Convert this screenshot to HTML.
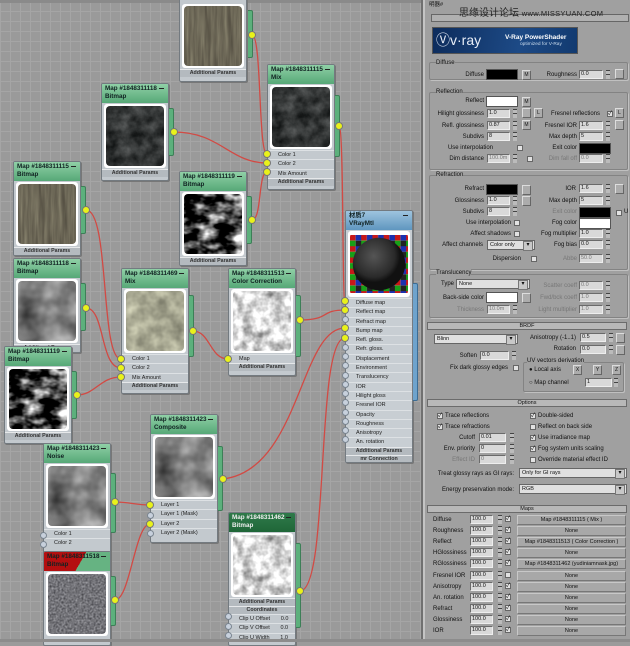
<!DOCTYPE html>
<html><head><meta charset="utf-8">
<style>
*{margin:0;padding:0;box-sizing:border-box}
body{width:630px;height:642px;overflow:hidden;position:relative;font-family:"Liberation Sans","Noto Sans CJK SC",sans-serif;font-size:6px;color:#111;background:#9b9b9b}
#grid{position:absolute;left:0;top:0;width:421px;height:642px;background-color:#9a9a9a;background-image:repeating-linear-gradient(0deg,#a5a5a5 0 1px,transparent 1px 10px),repeating-linear-gradient(90deg,#a5a5a5 0 1px,transparent 1px 10px);border-top:3px solid #8a8a8a}
.node{position:absolute;width:68px;background:#c3c9ce;border:1px solid #737a80;border-radius:2px;box-shadow:1px 1px 0 #777;overflow:hidden}
.hd{height:19px;background:linear-gradient(#8fd0a6,#56a877);font-weight:bold;font-size:6.3px;line-height:8px;padding:1px 3px;color:#122;position:relative}
.hd:after{content:"";position:absolute;right:4px;top:4px;width:5px;height:1px;background:#222}
.im{margin:1px 2px;height:64px;background:#fff;border-radius:3px;padding:2px;position:relative}
.im svg{display:block;width:100%;height:100%;border-radius:4px}
.row{height:9.3px;border-top:1px solid #dde1e4;padding-left:10px;font-size:5.5px;line-height:8px;color:#222}
.ap{height:8px;background:#b4babf;border-top:1px solid #e6e8ea;font-size:5.3px;font-weight:bold;text-align:center;line-height:7px;color:#333}
.tab{position:absolute;width:5px;background:#5cb07c;border:1px solid #3d7f57;border-left:none;border-radius:0 2px 2px 0}
.dot{position:absolute;width:8px;height:8px;border-radius:50%;background:#e9f21a;border:1px solid #777;margin:-4px 0 0 -4px;z-index:5}
.od{position:absolute;width:7px;height:7px;border-radius:50%;background:#c7d0dc;border:1px solid #7a8590;margin:-3.5px 0 0 -3.5px;z-index:5}
#wires{position:absolute;left:0;top:0;z-index:4}
#panel{position:absolute;left:421px;top:0;width:209px;height:642px;background:#a0a0a0;border-left:2px solid #707070;box-shadow:inset 2px 0 0 #c4c4c4}
.a{position:absolute;white-space:nowrap;line-height:8px}
.r{position:absolute;white-space:nowrap;line-height:8px;text-align:right}
.g{color:#777}
.f{position:absolute;height:9px;background:#d9d9d9;border:1px solid #6a6a6a;border-right-color:#eee;border-bottom-color:#eee;font-size:5.5px;line-height:7px;padding-left:1px}
.sp{position:absolute;width:4px;height:9px;background:linear-gradient(#444 0 1px,#bbb 1px 4px,#444 4px 5px,#bbb 5px)}
.b{position:absolute;width:9px;height:10px;background:#acacac;border:1px solid #ddd;border-right-color:#666;border-bottom-color:#666;font-size:5px;text-align:center;line-height:8px}
.cb{position:absolute;width:6px;height:6px;background:#e2e2e2;border:1px solid #666;font-size:6px;line-height:4px;text-align:center}
.sw{position:absolute;width:32px;height:11px;border:1px solid #555}
.grp{position:absolute;border:1px solid #838383;box-shadow:1px 1px 0 #c0c0c0;border-radius:2px}
.bar{position:absolute;left:4px;width:200px;height:8px;background:#b8b8b8;border:1px solid #6b6b6b;text-align:center;font-size:5.5px;line-height:6px}
.dd{position:absolute;height:10px;background:#e0e0e0;border:1px solid #666;font-size:5.5px;line-height:8px;padding-left:2px}
.dd:after{content:"▾";position:absolute;right:1px;top:0;width:8px;height:8px;background:#c8c8c8;border:1px solid #777;font-size:6px;text-align:center;line-height:6px}
.mb{position:absolute;left:94px;width:109px;height:10px;background:#a8a8a8;border:1px solid #c8c8c8;border-right-color:#777;border-bottom-color:#777;text-align:center;font-size:5.5px;line-height:8px}
</style></head><body>
<svg width="0" height="0" style="position:absolute">
<defs>
<filter id="tGray" color-interpolation-filters="sRGB"><feTurbulence type="fractalNoise" baseFrequency="0.3 0.02" numOctaves="3" seed="2"/><feColorMatrix values="0 0 0 0.3 0.27  0 0 0 0.3 0.25  0 0 0 0.25 0.21  0 0 0 0 1"/></filter>
<filter id="tDark" color-interpolation-filters="sRGB"><feTurbulence type="fractalNoise" baseFrequency="0.08" numOctaves="4" seed="5"/><feColorMatrix values="0 0 0 0.4 0.0  0 0 0 0.4 0.01  0 0 0 0.4 0.01  0 0 0 0 1"/></filter>
<filter id="tMarble" color-interpolation-filters="sRGB"><feTurbulence type="fractalNoise" baseFrequency="0.06 0.1" numOctaves="3" seed="9"/><feColorMatrix values="0 0 0 2.4 -0.9  0 0 0 2.4 -0.9  0 0 0 2.4 -0.9  0 0 0 0 1"/></filter>
<filter id="tLight" color-interpolation-filters="sRGB"><feTurbulence type="fractalNoise" baseFrequency="0.07" numOctaves="3" seed="3"/><feColorMatrix values="0 0 0 0.5 0.4  0 0 0 0.5 0.4  0 0 0 0.45 0.34  0 0 0 0 1"/></filter>
<filter id="tWhite" color-interpolation-filters="sRGB"><feTurbulence type="fractalNoise" baseFrequency="0.1" numOctaves="3" seed="7"/><feColorMatrix values="0 0 0 1.0 0.35  0 0 0 1.0 0.35  0 0 0 1.0 0.35  0 0 0 0 1"/></filter>
<filter id="tCloud" color-interpolation-filters="sRGB"><feTurbulence type="fractalNoise" baseFrequency="0.04" numOctaves="3" seed="11"/><feColorMatrix values="0 0 0 0.7 0.15  0 0 0 0.7 0.15  0 0 0 0.7 0.15  0 0 0 0 1"/></filter>
<filter id="tFine" color-interpolation-filters="sRGB"><feTurbulence type="fractalNoise" baseFrequency="0.5" numOctaves="2" seed="1"/><feColorMatrix values="0 0 0 0.5 0.2  0 0 0 0.5 0.2  0 0 0 0.5 0.22  0 0 0 0 1"/></filter>
</defs></svg>

<div id="grid"></div>

<div class="node" style="left:179px;top:-2px;height:84px"><div class="im" style="margin-top:5px"><svg><rect width="100%" height="100%" filter="url(#tGray)"/></svg></div><div class="ap">Additional Params</div></div>
<div class="tab" style="left:248px;top:10px;height:48px"></div>

<div class="node" style="left:267px;top:64px;height:126px"><div class="hd">Map #1848311115<br>Mix</div><div class="im"><svg><rect width="100%" height="100%" filter="url(#tDark)"/></svg></div><div class="row">Color 1</div><div class="row">Color 2</div><div class="row">Mix Amount</div><div class="ap">Additional Params</div></div>
<div class="tab" style="left:335px;top:95px;height:62px"></div>

<div class="node" style="left:101px;top:83px;height:98px"><div class="hd">Map #1848311118<br>Bitmap</div><div class="im"><svg><rect width="100%" height="100%" filter="url(#tDark)"/></svg></div><div class="ap">Additional Params</div></div>
<div class="tab" style="left:169px;top:108px;height:48px"></div>

<div class="node" style="left:13px;top:161px;height:95px"><div class="hd">Map #1848311115<br>Bitmap</div><div class="im"><svg><rect width="100%" height="100%" filter="url(#tGray)"/></svg></div><div class="ap">Additional Params</div></div>
<div class="tab" style="left:81px;top:186px;height:48px"></div>

<div class="node" style="left:179px;top:171px;height:95px"><div class="hd">Map #1848311119<br>Bitmap</div><div class="im"><svg><rect width="100%" height="100%" filter="url(#tMarble)"/></svg></div><div class="ap">Additional Params</div></div>
<div class="tab" style="left:247px;top:196px;height:48px"></div>

<div class="node" style="left:13px;top:258px;height:95px"><div class="hd">Map #1848311118<br>Bitmap</div><div class="im"><svg><rect width="100%" height="100%" filter="url(#tCloud)"/></svg></div><div class="ap">Additional Params</div></div>
<div class="tab" style="left:81px;top:283px;height:48px"></div>

<div class="node" style="left:121px;top:268px;height:126px"><div class="hd">Map #1848311469<br>Mix</div><div class="im"><svg><rect width="100%" height="100%" filter="url(#tLight)"/></svg></div><div class="row">Color 1</div><div class="row">Color 2</div><div class="row">Mix Amount</div><div class="ap">Additional Params</div></div>
<div class="tab" style="left:189px;top:295px;height:62px"></div>

<div class="node" style="left:228px;top:268px;height:108px"><div class="hd">Map #1848311513<br>Color Correction</div><div class="im"><svg><rect width="100%" height="100%" filter="url(#tWhite)"/></svg></div><div class="row">Map</div><div class="ap">Additional Params</div></div>
<div class="tab" style="left:296px;top:295px;height:62px"></div>

<div class="node" style="left:4px;top:346px;height:98px"><div class="hd">Map #1848311119<br>Bitmap</div><div class="im"><svg><rect width="100%" height="100%" filter="url(#tMarble)"/></svg></div><div class="ap">Additional Params</div></div>
<div class="tab" style="left:72px;top:371px;height:48px"></div>

<div class="node" style="left:150px;top:414px;height:129px"><div class="hd">Map #1848311423<br>Composite</div><div class="im"><svg><rect width="100%" height="100%" filter="url(#tCloud)"/></svg></div><div class="row">Layer 1</div><div class="row">Layer 1 (Mask)</div><div class="row">Layer 2</div><div class="row">Layer 2 (Mask)</div></div>
<div class="tab" style="left:218px;top:446px;height:65px"></div>

<div class="node" style="left:43px;top:443px;height:110px"><div class="hd">Map #1848311423<br>Noise</div><div class="im"><svg><rect width="100%" height="100%" filter="url(#tCloud)"/></svg></div><div class="row">Color 1</div><div class="row">Color 2</div></div>
<div class="tab" style="left:111px;top:473px;height:60px"></div>

<div class="node" style="left:43px;top:551px;height:95px"><div class="hd" style="background:linear-gradient(120deg,#b40f10 0 55%,#66b382 55%)">Map #1848311518<br>Bitmap</div><div class="im"><svg><rect width="100%" height="100%" filter="url(#tFine)"/></svg></div></div>
<div class="tab" style="left:111px;top:576px;height:50px"></div>

<div class="node" style="left:228px;top:512px;height:134px"><div class="hd" style="background:linear-gradient(#2f7a4a,#1f6638);color:#eee">Map #1848311462<br>Bitmap</div><div class="im"><svg><rect width="100%" height="100%" filter="url(#tWhite)"/></svg></div><div class="ap">Additional Params</div><div class="ap">Coordinates</div><div class="row">Clip U Offset &nbsp; &nbsp; &nbsp; 0.0</div><div class="row">Clip V Offset &nbsp; &nbsp; &nbsp; 0.0</div><div class="row">Clip U Width &nbsp; &nbsp; &nbsp; 1.0</div></div>
<div class="tab" style="left:296px;top:543px;height:85px"></div>

<div class="node" style="left:345px;top:210px;height:253px;background:#c8ced3"><div class="hd" style="background:linear-gradient(#9ec4df,#5f96bf)">材质7<br>VRayMtl</div>
<div class="im" style="height:66px;padding:2px"><svg viewBox="0 0 62 62"><defs><pattern id="chk" width="12" height="12" patternUnits="userSpaceOnUse"><rect width="6" height="6" fill="#c81818"/><rect x="6" width="6" height="6" fill="#1a30b0"/><rect y="6" width="6" height="6" fill="#18a018"/><rect x="6" y="6" width="6" height="6" fill="#222"/></pattern><radialGradient id="sph" cx="0.4" cy="0.35"><stop offset="0" stop-color="#555"/><stop offset="0.8" stop-color="#2a2a2a"/><stop offset="1" stop-color="#111"/></radialGradient></defs><rect width="62" height="62" fill="url(#chk)"/><circle cx="31" cy="31" r="28" fill="url(#sph)"/></svg></div>
<div class="row">Diffuse map</div><div class="row">Reflect map</div><div class="row">Refract map</div><div class="row">Bump map</div><div class="row">Refl. gloss.</div><div class="row">Refr. gloss.</div><div class="row">Displacement</div><div class="row">Environment</div><div class="row">Translucency</div><div class="row">IOR</div><div class="row">Hilight gloss</div><div class="row">Fresnel IOR</div><div class="row">Opacity</div><div class="row">Roughness</div><div class="row">Anisotropy</div><div class="row">An. rotation</div><div class="ap">Additional Params</div><div class="ap">mr Connection</div></div>
<div class="tab" style="left:413px;top:283px;height:118px;background:#6ea3cc;border-color:#3b6d95"></div>

<svg id="wires" width="421" height="642"><g fill="none" stroke="#d24a44" stroke-width="1.3">
<path d="M252 35 C262 35,258 154,267 154"/>
<path d="M174 132 C220 132,230 163,267 163"/>
<path d="M252 220 C262 220,258 172,267 172"/>
<path d="M339 126 C344 126,342 301,345 301"/>
<path d="M86 210 C110 210,100 359,121 359"/>
<path d="M86 308 C105 308,100 368,121 368"/>
<path d="M77 395 C95 395,100 377,121 377"/>
<path d="M193 331 C210 331,210 359,228 359"/>
<path d="M300 320 C330 320,320 310,345 310"/>
<path d="M223 479 C300 470,300 328,345 328"/>
<path d="M300 591 C330 591,315 338,345 338"/>
<path d="M115 502 C130 502,135 505,150 505"/>
<path d="M115 600 C130 600,135 524,150 524"/>
</g></svg>
<div class="dot" style="left:252px;top:35px"></div><div class="dot" style="left:174px;top:132px"></div><div class="dot" style="left:252px;top:220px"></div><div class="dot" style="left:339px;top:126px"></div><div class="dot" style="left:86px;top:210px"></div><div class="dot" style="left:86px;top:308px"></div><div class="dot" style="left:77px;top:395px"></div><div class="dot" style="left:193px;top:331px"></div><div class="dot" style="left:300px;top:320px"></div><div class="dot" style="left:223px;top:479px"></div><div class="dot" style="left:300px;top:591px"></div><div class="dot" style="left:115px;top:502px"></div><div class="dot" style="left:115px;top:600px"></div>
<div class="dot" style="left:267px;top:154px"></div><div class="dot" style="left:267px;top:163px"></div><div class="dot" style="left:267px;top:172px"></div>
<div class="dot" style="left:121px;top:359px"></div><div class="dot" style="left:121px;top:368px"></div><div class="dot" style="left:121px;top:377px"></div>
<div class="dot" style="left:228px;top:359px"></div><div class="dot" style="left:150px;top:505px"></div><div class="dot" style="left:150px;top:524px"></div>
<div class="dot" style="left:345px;top:301px"></div><div class="dot" style="left:345px;top:310px"></div><div class="dot" style="left:345px;top:328px"></div><div class="dot" style="left:345px;top:338px"></div>
<div class="od" style="left:345px;top:319px"></div><div class="od" style="left:345px;top:347px"></div><div class="od" style="left:345px;top:356px"></div><div class="od" style="left:345px;top:365px"></div><div class="od" style="left:345px;top:375px"></div><div class="od" style="left:345px;top:384px"></div><div class="od" style="left:345px;top:393px"></div><div class="od" style="left:345px;top:402px"></div><div class="od" style="left:345px;top:412px"></div><div class="od" style="left:345px;top:421px"></div><div class="od" style="left:345px;top:430px"></div><div class="od" style="left:345px;top:439px"></div>
<div class="od" style="left:150px;top:515px"></div><div class="od" style="left:150px;top:533px"></div><div class="od" style="left:43px;top:535px"></div><div class="od" style="left:43px;top:544px"></div>
<div class="od" style="left:228px;top:616px"></div><div class="od" style="left:228px;top:626px"></div><div class="od" style="left:228px;top:635px"></div>

<div id="panel">
<div class="a" style="left:6px;top:1px;font-size:5.5px">明器#</div>
<div style="position:absolute;left:8px;top:14px;width:198px;height:8px;background:#b0b0b0;border:1px solid #666"></div>
<div class="a" style="left:36px;top:8px;font-size:10px;line-height:12px;color:#222">思缘设计论坛 <span style="font-size:7.5px;letter-spacing:0.3px">www.MISSYUAN.COM</span></div>
<div style="position:absolute;left:9px;top:27px;width:146px;height:27px;background:linear-gradient(100deg,#0d2c5c,#1d4a86 60%,#123a70);border:1px solid #555"></div>
<div class="a" style="left:13px;top:33px;font-size:14px;line-height:15px;color:#e8eef8">Ⓥv·ray</div>
<div class="a" style="left:82px;top:34px;font-size:6.5px;font-weight:bold;color:#fff;line-height:7px">V-Ray PowerShader</div>
<div class="a" style="left:97px;top:42px;font-size:4.8px;color:#cde;line-height:6px">optimized for V-Ray</div>

<div class="grp" style="left:6px;top:62px;width:199px;height:18px"></div><div class="a" style="left:13px;top:59px;background:#a0a0a0">Diffuse</div>
<div class="r" style="right:146px;top:71px">Diffuse</div><div class="sw" style="left:63px;top:69px;background:#000"></div><div class="b" style="left:99px;top:70px">M</div>
<div class="r" style="right:53px;top:71px">Roughness</div><div class="f" style="left:156px;top:70px;width:24px">0.0</div><div class="sp" style="left:183px;top:70px"></div><div class="b" style="left:192px;top:69px"></div>

<div class="grp" style="left:6px;top:92px;width:199px;height:78px"></div><div class="a" style="left:13px;top:88px;background:#a0a0a0">Reflection</div>
<div class="r" style="right:146px;top:97px">Reflect</div><div class="sw" style="left:63px;top:96px;background:#fff"></div><div class="b" style="left:99px;top:97px">M</div>
<div class="r" style="right:146px;top:110px">Hilight glossiness</div><div class="f" style="left:64px;top:109px;width:23px">1.0</div><div class="sp" style="left:90px;top:109px"></div><div class="b" style="left:99px;top:108px"></div><div class="b" style="left:111px;top:108px">L</div>
<div class="r" style="right:30px;top:110px">Fresnel reflections</div><div class="cb" style="left:184px;top:111px">✓</div><div class="b" style="left:192px;top:108px">L</div>
<div class="r" style="right:146px;top:122px">Refl. glossiness</div><div class="f" style="left:64px;top:121px;width:23px">0.87</div><div class="sp" style="left:90px;top:121px"></div><div class="b" style="left:99px;top:120px">M</div>
<div class="r" style="right:53px;top:122px">Fresnel IOR</div><div class="f" style="left:156px;top:121px;width:24px">1.6</div><div class="sp" style="left:183px;top:121px"></div><div class="b" style="left:192px;top:120px"></div>
<div class="r" style="right:146px;top:133px">Subdivs</div><div class="f" style="left:64px;top:132px;width:23px">8</div><div class="sp" style="left:90px;top:132px"></div>
<div class="r" style="right:53px;top:133px">Max depth</div><div class="f" style="left:156px;top:132px;width:24px">5</div><div class="sp" style="left:183px;top:132px"></div>
<div class="r" style="right:137px;top:144px">Use interpolation</div><div class="cb" style="left:94px;top:145px"></div>
<div class="r" style="right:53px;top:144px">Exit color</div><div class="sw" style="left:156px;top:143px;background:#000"></div>
<div class="r" style="right:146px;top:155px">Dim distance</div><div class="f g" style="left:64px;top:154px;width:23px">100.0m</div><div class="sp" style="left:90px;top:154px"></div><div class="cb" style="left:104px;top:156px"></div>
<div class="r g" style="right:53px;top:155px">Dim fall off</div><div class="f g" style="left:156px;top:154px;width:24px">0.0</div><div class="sp" style="left:183px;top:154px"></div>

<div class="grp" style="left:6px;top:175px;width:199px;height:95px"></div><div class="a" style="left:13px;top:171px;background:#a0a0a0">Refraction</div>
<div class="r" style="right:146px;top:185px">Refract</div><div class="sw" style="left:63px;top:184px;background:#000"></div><div class="b" style="left:99px;top:185px"></div>
<div class="r" style="right:54px;top:185px">IOR</div><div class="f" style="left:156px;top:184px;width:24px">1.6</div><div class="sp" style="left:183px;top:184px"></div><div class="b" style="left:192px;top:184px"></div>
<div class="r" style="right:146px;top:197px">Glossiness</div><div class="f" style="left:64px;top:196px;width:23px">1.0</div><div class="sp" style="left:90px;top:196px"></div><div class="b" style="left:99px;top:196px"></div>
<div class="r" style="right:53px;top:197px">Max depth</div><div class="f" style="left:156px;top:196px;width:24px">5</div><div class="sp" style="left:183px;top:196px"></div>
<div class="r" style="right:146px;top:208px">Subdivs</div><div class="f" style="left:64px;top:207px;width:23px">8</div><div class="sp" style="left:90px;top:207px"></div>
<div class="r g" style="right:53px;top:208px">Exit color</div><div class="sw" style="left:156px;top:207px;background:#000"></div><div class="cb" style="left:193px;top:210px"></div><div class="a" style="left:201px;top:208px">U</div>
<div class="r" style="right:119px;top:219px">Use interpolation</div><div class="cb" style="left:91px;top:220px"></div>
<div class="r" style="right:53px;top:219px">Fog color</div><div class="sw" style="left:156px;top:218px;background:#fff"></div>
<div class="r" style="right:119px;top:230px">Affect shadows</div><div class="cb" style="left:91px;top:231px"></div>
<div class="r" style="right:53px;top:230px">Fog multiplier</div><div class="f" style="left:156px;top:229px;width:24px">1.0</div><div class="sp" style="left:183px;top:229px"></div>
<div class="r" style="right:147px;top:241px">Affect channels</div><div class="dd" style="left:64px;top:240px;width:48px">Color only</div>
<div class="r" style="right:53px;top:241px">Fog bias</div><div class="f" style="left:156px;top:240px;width:24px">0.0</div><div class="sp" style="left:183px;top:240px"></div>
<div class="r" style="right:109px;top:255px">Dispersion</div><div class="cb" style="left:108px;top:256px"></div>
<div class="r g" style="right:53px;top:255px">Abbe</div><div class="f g" style="left:156px;top:254px;width:24px">50.0</div><div class="sp" style="left:183px;top:254px"></div>

<div class="grp" style="left:6px;top:274px;width:199px;height:44px"></div><div class="a" style="left:13px;top:269px;background:#a0a0a0">Translucency</div>
<div class="r" style="right:176px;top:280px">Type</div><div class="dd" style="left:33px;top:279px;width:74px">None</div>
<div class="r g" style="right:53px;top:282px">Scatter coeff</div><div class="f g" style="left:156px;top:281px;width:24px">0.0</div><div class="sp" style="left:183px;top:281px"></div>
<div class="r" style="right:146px;top:294px">Back-side color</div><div class="sw" style="left:63px;top:292px;background:#fff"></div><div class="b" style="left:99px;top:293px"></div>
<div class="r g" style="right:53px;top:294px">Fwd/bck coeff</div><div class="f g" style="left:156px;top:293px;width:24px">1.0</div><div class="sp" style="left:183px;top:293px"></div>
<div class="r g" style="right:146px;top:306px">Thickness</div><div class="f g" style="left:64px;top:305px;width:23px">10.0m</div><div class="sp" style="left:90px;top:305px"></div>
<div class="r g" style="right:53px;top:306px">Light multiplier</div><div class="f g" style="left:156px;top:305px;width:24px">1.0</div><div class="sp" style="left:183px;top:305px"></div>

<div class="bar" style="top:322px">BRDF</div>
<div class="dd" style="left:11px;top:334px;width:84px">Blinn</div>
<div class="r" style="right:54px;top:334px">Anisotropy (-1..1)</div><div class="f" style="left:157px;top:333px;width:26px">0.5</div><div class="sp" style="left:186px;top:333px"></div><div class="b" style="left:193px;top:333px"></div>
<div class="r" style="right:54px;top:345px">Rotation</div><div class="f" style="left:157px;top:345px;width:26px">0.0</div><div class="sp" style="left:186px;top:345px"></div><div class="b" style="left:193px;top:345px"></div>
<div class="r" style="right:153px;top:352px">Soften</div><div class="f" style="left:57px;top:351px;width:29px">0.0</div><div class="sp" style="left:89px;top:351px"></div>
<div class="r" style="right:122px;top:364px">Fix dark glossy edges</div><div class="cb" style="left:90px;top:365px"></div>
<div class="grp" style="left:100px;top:362px;width:101px;height:30px"></div><div class="a" style="left:104px;top:357px;background:#a0a0a0">UV vectors derivation</div>
<div class="a" style="left:106px;top:366px">● Local axis</div><div class="b" style="left:150px;top:365px">X</div><div class="b" style="left:170px;top:365px">Y</div><div class="b" style="left:189px;top:365px">Z</div>
<div class="a" style="left:106px;top:379px">○ Map channel</div><div class="f" style="left:162px;top:378px;width:27px">1</div><div class="sp" style="left:191px;top:378px"></div>

<div class="bar" style="top:399px">Options</div>
<div class="cb" style="left:14px;top:413px">✓</div><div class="a" style="left:22px;top:412px">Trace reflections</div>
<div class="cb" style="left:14px;top:424px">✓</div><div class="a" style="left:22px;top:423px">Trace refractions</div>
<div class="cb" style="left:107px;top:413px">✓</div><div class="a" style="left:115px;top:412px">Double-sided</div>
<div class="cb" style="left:107px;top:424px"></div><div class="a" style="left:115px;top:423px">Reflect on back side</div>
<div class="cb" style="left:107px;top:435px">✓</div><div class="a" style="left:115px;top:434px">Use irradiance map</div>
<div class="cb" style="left:107px;top:446px">✓</div><div class="a" style="left:115px;top:445px">Fog system units scaling</div>
<div class="cb" style="left:107px;top:457px"></div><div class="a" style="left:115px;top:456px">Override material effect ID</div>
<div class="r" style="right:155px;top:434px">Cutoff</div><div class="f" style="left:56px;top:433px;width:27px">0.01</div><div class="sp" style="left:87px;top:433px"></div>
<div class="r" style="right:155px;top:445px">Env. priority</div><div class="f" style="left:56px;top:444px;width:27px">0</div><div class="sp" style="left:87px;top:444px"></div>
<div class="r g" style="right:155px;top:456px">Effect ID</div><div class="f g" style="left:56px;top:455px;width:27px">0</div><div class="sp" style="left:87px;top:455px"></div>
<div class="r" style="right:116px;top:470px">Treat glossy rays as GI rays:</div><div class="dd" style="left:96px;top:468px;width:108px">Only for GI rays</div>
<div class="r" style="right:116px;top:486px">Energy preservation mode:</div><div class="dd" style="left:96px;top:484px;width:108px">RGB</div>

<div class="bar" style="top:505px">Maps</div>
<div style="position:absolute;left:0;top:516px">
<div class="a" style="left:10px;top:0">Diffuse</div>
<div class="a" style="left:10px;top:11px">Roughness</div>
<div class="a" style="left:10px;top:22px">Reflect</div>
<div class="a" style="left:10px;top:33px">HGlossiness</div>
<div class="a" style="left:10px;top:44px">RGlossiness</div>
<div class="a" style="left:10px;top:56px">Fresnel IOR</div>
<div class="a" style="left:10px;top:67px">Anisotropy</div>
<div class="a" style="left:10px;top:78px">An. rotation</div>
<div class="a" style="left:10px;top:89px">Refract</div>
<div class="a" style="left:10px;top:100px">Glossiness</div>
<div class="a" style="left:10px;top:111px">IOR</div>
</div>
<div style="position:absolute;left:0;top:515px;width:209px">
<div class="f" style="left:47px;top:0;width:23px">100.0</div><div class="sp" style="left:75px;top:0"></div><div class="cb" style="left:82px;top:1px">✓</div><div class="mb" style="top:0">Map #1848311115 ( Mix )</div>
<div class="f" style="left:47px;top:11px;width:23px">100.0</div><div class="sp" style="left:75px;top:11px"></div><div class="cb" style="left:82px;top:12px">✓</div><div class="mb" style="top:11px">None</div>
<div class="f" style="left:47px;top:22px;width:23px">100.0</div><div class="sp" style="left:75px;top:22px"></div><div class="cb" style="left:82px;top:23px">✓</div><div class="mb" style="top:22px">Map #1848311513 ( Color Correction )</div>
<div class="f" style="left:47px;top:33px;width:23px">100.0</div><div class="sp" style="left:75px;top:33px"></div><div class="cb" style="left:82px;top:34px">✓</div><div class="mb" style="top:33px">None</div>
<div class="f" style="left:47px;top:44px;width:23px">100.0</div><div class="sp" style="left:75px;top:44px"></div><div class="cb" style="left:82px;top:45px">✓</div><div class="mb" style="top:44px">Map #1848311462 (yudiniamnask.jpg)</div>
<div class="f" style="left:47px;top:56px;width:23px">100.0</div><div class="sp" style="left:75px;top:56px"></div><div class="cb" style="left:82px;top:57px"></div><div class="mb" style="top:56px">None</div>
<div class="f" style="left:47px;top:67px;width:23px">100.0</div><div class="sp" style="left:75px;top:67px"></div><div class="cb" style="left:82px;top:68px">✓</div><div class="mb" style="top:67px">None</div>
<div class="f" style="left:47px;top:78px;width:23px">100.0</div><div class="sp" style="left:75px;top:78px"></div><div class="cb" style="left:82px;top:79px">✓</div><div class="mb" style="top:78px">None</div>
<div class="f" style="left:47px;top:89px;width:23px">100.0</div><div class="sp" style="left:75px;top:89px"></div><div class="cb" style="left:82px;top:90px">✓</div><div class="mb" style="top:89px">None</div>
<div class="f" style="left:47px;top:100px;width:23px">100.0</div><div class="sp" style="left:75px;top:100px"></div><div class="cb" style="left:82px;top:101px">✓</div><div class="mb" style="top:100px">None</div>
<div class="f" style="left:47px;top:111px;width:23px">100.0</div><div class="sp" style="left:75px;top:111px"></div><div class="cb" style="left:82px;top:112px">✓</div><div class="mb" style="top:111px">None</div>
</div>
</div>
<div style="position:absolute;left:0;top:639px;width:630px;height:3px;background:#8c8c8c"></div>
</body></html>
